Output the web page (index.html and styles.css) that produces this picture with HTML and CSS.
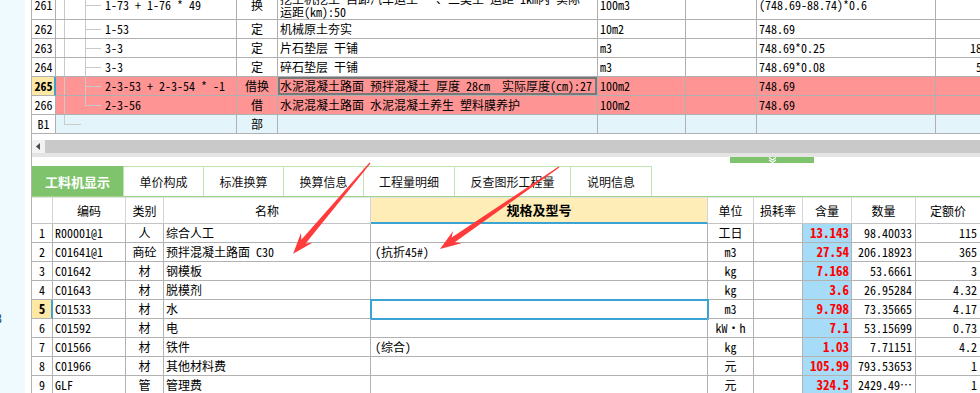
FILE: index.html
```html
<!DOCTYPE html>
<html lang="zh-CN">
<head>
  <meta charset="UTF-8">
  <title>工料机显示</title>
  <link rel="stylesheet" href="styles.css">
</head>
<body>
  <div class="app">
    <aside class="side"><span class="side-mark">3</span></aside>

    <main class="panel">
      <div class="upper">
        <div class="urow tall">
          <div class="num">261</div>
          <div class="tree">1-73 + 1-76 * 49</div>
          <div class="type">换</div>
          <div class="name two">挖土机挖土 自卸汽车运土 一、二类土 运距 1km内 实际<br>运距(km):50</div>
          <div class="unit">100m3</div>
          <div></div>
          <div class="expr">(748.69-88.74)*0.6</div>
          <div class="last"></div>
        </div>
        <div class="urow">
          <div class="num">262</div>
          <div class="tree">1-53</div>
          <div class="type">定</div>
          <div class="name">机械原土夯实</div>
          <div class="unit">10m2</div>
          <div></div>
          <div class="expr">748.69</div>
          <div class="last"></div>
        </div>
        <div class="urow">
          <div class="num">263</div>
          <div class="tree">3-3</div>
          <div class="type">定</div>
          <div class="name">片石垫层 干铺</div>
          <div class="unit">m3</div>
          <div></div>
          <div class="expr">748.69*0.25</div>
          <div class="last">187.17</div>
        </div>
        <div class="urow">
          <div class="num">264</div>
          <div class="tree">3-3</div>
          <div class="type">定</div>
          <div class="name">碎石垫层 干铺</div>
          <div class="unit">m3</div>
          <div></div>
          <div class="expr">748.69*0.08</div>
          <div class="last">59.90</div>
        </div>
        <div class="urow pink sel">
          <div class="num">265</div>
          <div class="tree">2-3-53 + 2-3-54 * -1</div>
          <div class="type">借换</div>
          <div class="name focus">水泥混凝土路面 预拌混凝土 厚度 28cm&nbsp; 实际厚度(cm):27</div>
          <div class="unit">100m2</div>
          <div></div>
          <div class="expr">748.69</div>
          <div class="last"></div>
        </div>
        <div class="urow pink">
          <div class="num">266</div>
          <div class="tree last-child">2-3-56</div>
          <div class="type">借</div>
          <div class="name">水泥混凝土路面 水泥混凝土养生 塑料膜养护</div>
          <div class="unit">100m2</div>
          <div></div>
          <div class="expr">748.69</div>
          <div class="last"></div>
        </div>
        <div class="urow part">
          <div class="num">B1</div>
          <div class="tree root"></div>
          <div class="type">部</div>
          <div class="name"></div>
          <div class="unit"></div>
          <div></div>
          <div class="expr"></div>
          <div class="last"></div>
        </div>
      </div>

      <div class="hscroll">
        <span class="hs-btn">
          <svg width="5" height="7" viewBox="0 0 5 7"><polygon points="4,0 4,7 0,3.5" fill="#4a4a4a"/></svg>
        </span>
      </div>
      <div class="hs-under"></div>

      <div class="splitter">
        <span class="grip">
          <svg width="9" height="6" viewBox="0 0 9 6"><polyline points="1,0.5 4.5,3 8,0.5" fill="none" stroke="#fff" stroke-width="1.2"/><polyline points="1,3 4.5,5.5 8,3" fill="none" stroke="#fff" stroke-width="1.2"/></svg>
        </span>
      </div>

      <nav class="tabs">
        <span class="tab active" style="width:92px">工料机显示</span>
        <span class="tab" style="width:80px">单价构成</span>
        <span class="tab" style="width:80px">标准换算</span>
        <span class="tab" style="width:80px">换算信息</span>
        <span class="tab" style="width:91px">工程量明细</span>
        <span class="tab" style="width:116px">反查图形工程量</span>
        <span class="tab" style="width:81px">说明信息</span>
      </nav>

      <div class="lower">
        <div class="lrow head">
          <div></div>
          <div>编码</div>
          <div>类别</div>
          <div>名称</div>
          <div class="spec-head">规格及型号</div>
          <div>单位</div>
          <div>损耗率</div>
          <div>含量</div>
          <div>数量</div>
          <div>定额价</div>
        </div>
        <div class="lrow">
          <div class="no">1</div><div class="code">R00001@1</div><div class="kind">人</div><div class="lname">综合人工</div><div class="spec"></div><div class="lunit">工日</div><div></div><div class="amt">13.143</div><div class="qty">98.40033</div><div class="price">115</div>
        </div>
        <div class="lrow">
          <div class="no">2</div><div class="code">C01641@1</div><div class="kind">商砼</div><div class="lname">预拌混凝土路面 C30</div><div class="spec">(抗折45#)</div><div class="lunit">m3</div><div></div><div class="amt">27.54</div><div class="qty">206.18923</div><div class="price">365</div>
        </div>
        <div class="lrow">
          <div class="no">3</div><div class="code">C01642</div><div class="kind">材</div><div class="lname">钢模板</div><div class="spec"></div><div class="lunit">kg</div><div></div><div class="amt">7.168</div><div class="qty">53.6661</div><div class="price">3</div>
        </div>
        <div class="lrow">
          <div class="no">4</div><div class="code">C01643</div><div class="kind">材</div><div class="lname">脱模剂</div><div class="spec"></div><div class="lunit">kg</div><div></div><div class="amt">3.6</div><div class="qty">26.95284</div><div class="price">4.32</div>
        </div>
        <div class="lrow sel">
          <div class="no">5</div><div class="code">C01533</div><div class="kind">材</div><div class="lname">水</div><div class="spec focus"></div><div class="lunit">m3</div><div></div><div class="amt">9.798</div><div class="qty">73.35665</div><div class="price">4.17</div>
        </div>
        <div class="lrow">
          <div class="no">6</div><div class="code">C01592</div><div class="kind">材</div><div class="lname">电</div><div class="spec"></div><div class="lunit">kW・h</div><div></div><div class="amt">7.1</div><div class="qty">53.15699</div><div class="price">0.73</div>
        </div>
        <div class="lrow">
          <div class="no">7</div><div class="code">C01566</div><div class="kind">材</div><div class="lname">铁件</div><div class="spec">(综合)</div><div class="lunit">kg</div><div></div><div class="amt">1.03</div><div class="qty">7.71151</div><div class="price">4.2</div>
        </div>
        <div class="lrow">
          <div class="no">8</div><div class="code">C01966</div><div class="kind">材</div><div class="lname">其他材料费</div><div class="spec"></div><div class="lunit">元</div><div></div><div class="amt">105.99</div><div class="qty">793.53653</div><div class="price">1</div>
        </div>
        <div class="lrow">
          <div class="no">9</div><div class="code">GLF</div><div class="kind">管</div><div class="lname">管理费</div><div class="spec"></div><div class="lunit">元</div><div></div><div class="amt">324.5</div><div class="qty">2429.49…</div><div class="price">1</div>
        </div>
      </div>
    </main>

    <!-- annotation arrows drawn over the screenshot -->
    <svg class="marks" width="980" height="393" viewBox="0 0 980 393">
      <g fill="#ff3b3b">
        <polygon transform="translate(370 163) rotate(130.24)" points="0,-0.6 103,-2.8 98,-7.5 119,0 98,7.5 103,2.8 0,0.6"/>
        <polygon transform="translate(559 167) rotate(145.43)" points="0,-0.6 128.5,-2.8 123.5,-7.5 144.5,0 123.5,7.5 128.5,2.8 0,0.6"/>
      </g>
    </svg>
  </div>
</body>
</html>
```

FILE: styles.css
```css
body {
  margin: 0;
  font-family: "Noto Sans Mono CJK SC", "Noto Sans CJK SC", sans-serif;
  font-size: 12px;
  color: #000;
  background: #fff;
  overflow: hidden;
}

.app {
  display: flex;
  height: 393px;
  position: relative;
  overflow: hidden;
}

.side {
  width: 25px;
  flex: none;
  margin-right: 6px;
  background-color: #eefafd;
  padding-top: 309px;
  box-sizing: border-box;
}

.side-mark {
  display: block;
  margin-left: -4px;
  color: #1d3c6b;
}

.panel {
  flex: 1;
  min-width: 0;
  border-left: 1px solid #b4b4b4;
  display: flex;
  flex-direction: column;
  overflow: hidden;
}

/* upper grid */

.upper {
  height: 140px;
  flex: none;
  overflow: hidden;
}

.urow {
  display: grid;
  grid-template-columns: 24px 181px 41px 320px 88px 71px 179px 74px;
  height: 19px;
  line-height: 18px;
}

.urow > div {
  display: flex;
  align-items: center;
  border-right: 1px solid #b0b0b0;
  border-bottom: 1px solid #b0b0b0;
  white-space: nowrap;
  overflow: hidden;
}

.urow.tall {
  height: 29px;
  margin-top: -9px;
}

.urow .num {
  justify-content: center;
  background-color: #fff;
}

.urow.sel .num {
  background-color: #fde8a6;
  font-weight: bold;
  border-right-color: #3aa3d3;
  box-shadow: inset -1px 0 #3aa3d3;
}

.tree {
  padding-left: 49px;
  background-image:
    linear-gradient(#c9c9c9, #c9c9c9),
    linear-gradient(#c9c9c9, #c9c9c9),
    linear-gradient(#c9c9c9, #c9c9c9);
  background-size: 1px 100%, 1px 100%, 16px 1px;
  background-position: 8px 0, 29px 0, 29px 50%;
  background-repeat: no-repeat;
}

.tree.last-child {
  background-size: 1px 100%, 1px 50%, 16px 1px;
}

.tree.root {
  background-image:
    linear-gradient(#c9c9c9, #c9c9c9),
    linear-gradient(#c9c9c9, #c9c9c9);
  background-size: 1px 50%, 17px 1px;
  background-position: 8px 0, 8px 50%;
}

.urow .type {
  justify-content: center;
}

.urow .name {
  padding-left: 2px;
}

.urow .name.two {
  line-height: 13px;
}

.urow .name.focus {
  box-shadow: inset 0 0 0 2px #787878;
}

.urow .unit {
  padding-left: 2px;
}

.urow .expr {
  padding-left: 2px;
}

.urow .last {
  justify-content: flex-end;
  padding-right: 3px;
}

.pink {
  background-color: #ff9494;
}

.part {
  background-color: #e3f5fb;
}

/* scroll bar and splitter */

.hscroll {
  height: 13px;
  flex: none;
  background-color: #c9c9c9;
  display: flex;
}

.hs-btn {
  width: 13px;
  height: 13px;
  background-color: #f2f2f2;
  display: flex;
  align-items: center;
  justify-content: center;
}

.hs-under {
  height: 4px;
  flex: none;
  background-color: #e4e4e4;
}

.splitter {
  height: 9px;
  flex: none;
}

.grip {
  display: flex;
  align-items: center;
  justify-content: center;
  margin-left: 698px;
  width: 84px;
  height: 6px;
  background-color: #7fc46d;
}

/* tabs */

.tabs {
  display: flex;
  height: 31px;
  flex: none;
  box-sizing: border-box;
  border-bottom: 1px solid #9fd68c;
}

.tab {
  box-sizing: border-box;
  flex: none;
  display: flex;
  align-items: center;
  justify-content: center;
  border-top: 1px solid #bfe6b0;
  border-right: 1px solid #bfe6b0;
  color: #111;
}

.tab.active {
  background-color: #7fc46d;
  color: #fff;
  font-weight: bold;
  font-size: 13px;
  border-top-color: #7fc46d;
}

/* lower grid */

.lrow {
  display: grid;
  grid-template-columns: 21px 73px 38px 207px 337px 46px 49px 49px 64px 65px;
  height: 19px;
  line-height: 18px;
}

.lrow > div {
  display: flex;
  align-items: center;
  border-right: 1px solid #b2b2b2;
  border-bottom: 1px solid #b2b2b2;
  white-space: nowrap;
  overflow: hidden;
}

.lrow.head {
  height: 27px;
}

.lrow.head > div {
  justify-content: center;
  border-right-color: #d4d4d4;
  border-top: 1px solid #e2e2e2;
  border-bottom-color: #c4c4c4;
}

.lrow.head .spec-head {
  background-color: #feedb6;
  font-weight: bold;
  font-size: 13px;
  border-bottom: 2px solid #3aa3d3;
}

.lrow .no,
.lrow .kind,
.lrow .lunit {
  justify-content: center;
}

.lrow .code,
.lrow .lname {
  padding-left: 2px;
}

.lrow .spec {
  padding-left: 4px;
}

.lrow .spec.focus {
  outline: 2px solid #3aa3d3;
  outline-offset: -1px;
}

.lrow.sel .no {
  background-color: #fde8a6;
  font-weight: bold;
  font-size: 13px;
  border-right-color: #3aa3d3;
  box-shadow: inset -1px 0 #3aa3d3;
}

.lrow .amt {
  justify-content: flex-end;
  padding-right: 2px;
  background-color: #a6dcf8;
  color: #ff0000;
  font-weight: bold;
  font-size: 13px;
}

.lrow .qty,
.lrow .price {
  justify-content: flex-end;
  padding-right: 3px;
}

.marks {
  position: absolute;
  left: 0;
  top: 0;
  pointer-events: none;
}
```
